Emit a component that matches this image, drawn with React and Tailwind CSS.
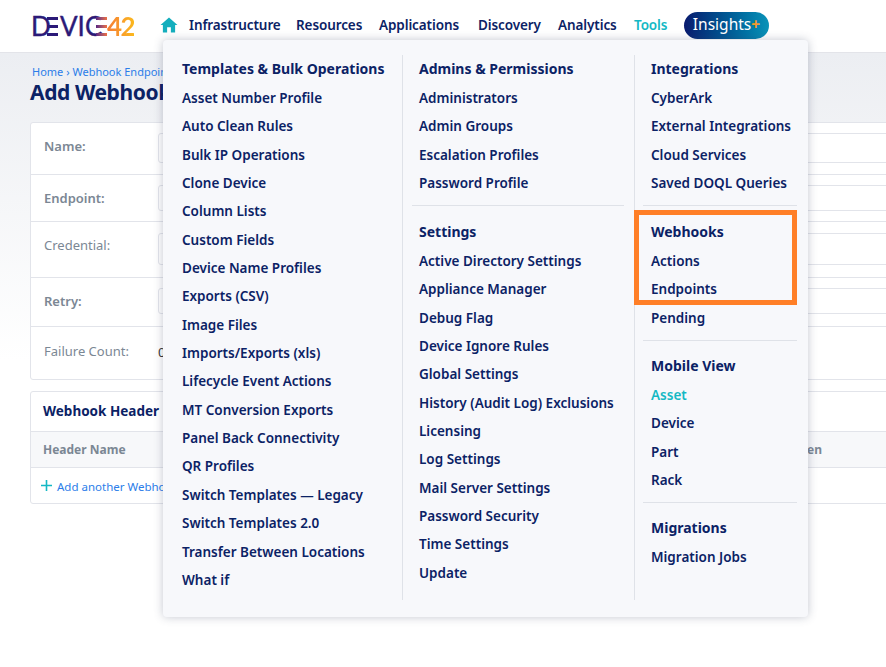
const font = { fontFamily: '"Noto Sans", "Liberation Sans", sans-serif' };

const col1 = ["Asset Number Profile", "Auto Clean Rules", "Bulk IP Operations", "Clone Device", "Column Lists", "Custom Fields", "Device Name Profiles", "Exports (CSV)", "Image Files", "Imports/Exports (xls)", "Lifecycle Event Actions", "MT Conversion Exports", "Panel Back Connectivity", "QR Profiles", "Switch Templates — Legacy", "Switch Templates 2.0", "Transfer Between Locations", "What if"];

const admins = ["Administrators", "Admin Groups", "Escalation Profiles", "Password Profile"];
const settings = ["Active Directory Settings", "Appliance Manager", "Debug Flag", "Device Ignore Rules", "Global Settings", "History (Audit Log) Exclusions", "Licensing", "Log Settings", "Mail Server Settings", "Password Security", "Time Settings", "Update"];
const integrations = ["CyberArk", "External Integrations", "Cloud Services", "Saved DOQL Queries"];
const webhooks = ["Actions", "Endpoints", "Pending"];
const mobile = ["Asset", "Device", "Part", "Rack"];

function Section({ title, items, active }) {
  return (
    <div>
      <div className="h-[29px] text-[14px] leading-[27px] font-bold text-[#0b2265] whitespace-nowrap">{title}</div>
      {items.map((item) => (
        <div key={item} className={"h-[28.35px] text-[13.5px] leading-[28.35px] font-semibold whitespace-nowrap " + (item === active ? "text-[#14b8c4]" : "text-[#0b2265]")}>
          {item}
        </div>
      ))}
    </div>
  );
}

function Bars({ className }) {
  return (
    <span className="flex flex-col justify-between shrink-0 w-[11px] h-[19px]">
      <span className={"block h-[3px] " + className} />
      <span className={"block h-[3px] " + className} />
      <span className={"block h-[3px] " + className} />
    </span>
  );
}

function Logo() {
  return (
    <div className="flex items-center shrink-0 h-[24px] w-[105px] text-[26px] leading-[24px] text-[#2b1a78] [-webkit-text-stroke:0.4px_#2b1a78]" style={{ fontFamily: '"Liberation Sans Narrow", "Lato", sans-serif' }}>
      <span className="w-[16px] shrink-0">D</span>
      <Bars className="bg-[#2b1a78]" />
      <span className="w-[38px] shrink-0 pl-[2px]">VIC</span>
      <Bars className="bg-gradient-to-r from-[#5a2380] to-[#f0703a]" />
      <span className="shrink-0 font-bold tracking-[-1.5px] bg-gradient-to-r from-[#f47b32] to-[#fbb81c] bg-clip-text text-transparent [-webkit-text-stroke:0]" style={{ fontFamily: '"Lato", sans-serif' }}>42</span>
    </div>
  );
}

function FormRow({ label, height, bold, low, boxTop, boxHeight, children }) {
  return (
    <div className="flex border-b border-[#e2e4ea] last:border-b-0" style={{ height }}>
      <div className={"w-[127px] pl-[13px] text-[13px] text-[#7b8794] " + (low ? "pt-[15px] " : "pt-[14px] ") + (bold ? "font-semibold" : "")}>{label}</div>
      {boxHeight ? (
        <div className="flex-1 border border-[#e2e4ea] rounded-[3px] bg-white" style={{ marginTop: boxTop, height: boxHeight }} />
      ) : (
        <div className="pt-[16px] text-[13px] text-[#333]">{children}</div>
      )}
    </div>
  );
}

export default function App() {
  return (
    <div className="relative h-[667px] w-[886px] overflow-hidden bg-white" style={font}>
      <header className="flex items-center h-[53px] bg-white border-b border-[#e3e4e9] pl-[31px]">
        <Logo />
        <svg className="shrink-0 ml-[24px] mr-[11px] -mt-[2px]" width="18" height="16" viewBox="0 0 19 17">
          <path d="M9.5 0.5 L0.5 8.5 L3 8.5 L3 16.5 L7.5 16.5 L7.5 11 L11.5 11 L11.5 16.5 L16 16.5 L16 8.5 L18.5 8.5 Z" fill="#14aebd" />
        </svg>
        <nav className="flex items-center gap-[17px] -mt-[2px] text-[13.5px] font-semibold tracking-[-0.1px] text-[#0b2265] whitespace-nowrap">
          <span className="w-[90px]">Infrastructure</span>
          <span className="w-[66px]">Resources</span>
          <span className="w-[82px]">Applications</span>
          <span className="w-[63px]">Discovery</span>
          <span className="w-[59px]">Analytics</span>
          <span className="w-[35px] text-[#14b8c4]">Tools</span>
          <span className="flex items-center justify-center shrink-0 h-[27px] w-[85px] -ml-[2px] rounded-full bg-gradient-to-r from-[#0a1a6e] to-[#0b93b8] text-[15.5px] font-normal tracking-normal text-white">
            Insights<span className="font-bold text-[#f59a2c]">+</span>
          </span>
        </nav>
      </header>

      <main className="h-[614px] pl-[30px] bg-gradient-to-b from-[#eceef2] via-white to-white">
        <div className="pt-[11px] pl-[2px] text-[11px] leading-[16px] text-[#2b7de9] whitespace-nowrap">Home › Webhook Endpoints</div>
        <h1 className="-mt-[3px] text-[21px] leading-[30px] font-bold tracking-[-0.4px] text-[#0b2265]">Add Webhook</h1>

        <section className="mt-[15px] w-[870px] bg-white border border-[#e2e4ea] rounded-[3px]">
          <FormRow label="Name:" height={52} bold boxTop={10} boxHeight={30} />
          <FormRow label="Endpoint:" height={47} bold boxTop={10} boxHeight={26} />
          <FormRow label="Credential:" height={56} boxTop={11} boxHeight={32} />
          <FormRow label="Retry:" height={49} bold boxTop={10} boxHeight={26} />
          <FormRow label="Failure Count:" height={52} low>0</FormRow>
        </section>

        <section className="mt-[11px] w-[870px] bg-white border border-[#e2e4ea] rounded-[3px]">
          <div className="h-[40px] border-b border-[#e2e4ea] pl-[12px] text-[13.5px] leading-[38px] font-bold text-[#0b2265]">Webhook Header</div>
          <div className="flex justify-between h-[36px] border-b border-[#e2e4ea] bg-[#f7f8fa] pl-[12px] pr-[77px] text-[12px] leading-[35px] font-bold text-[#7b8794]">
            <span>Header Name</span>
            <span>Hidden</span>
          </div>
          <div className="flex items-center h-[35px] pt-[2px] pl-[10px] text-[11.5px] text-[#2b7de9] whitespace-nowrap">
            <svg className="mr-[5px] shrink-0 -mt-[2px]" width="11" height="11" viewBox="0 0 11 11">
              <path d="M5.5 0 V11 M0 5.5 H11" stroke="#14b8c4" strokeWidth="1.6" />
            </svg>
            Add another Webhook Header
          </div>
        </section>
      </main>

      {/* tools dropdown */}
      <div className="absolute left-[163px] top-[40px] flex w-[645px] h-[577px] pt-[15px] bg-[#f7f8fb] rounded-[4px] shadow-[0_0_10px_rgba(60,70,100,0.3)]">
        <div className="w-[240px] h-[545px] pl-[19px] border-r border-[#dfe2e8]">
          <Section title="Templates & Bulk Operations" items={col1} />
        </div>
        <div className="w-[232px] h-[545px] pl-[16px] border-r border-[#dfe2e8]">
          <Section title="Admins & Permissions" items={admins} />
          <div className="-ml-[7px] w-[212px] mt-[8px] mb-[11.5px] border-t border-[#dfe2e8]" />
          <Section title="Settings" items={settings} />
        </div>
        <div className="w-[173px] pl-[16px]">
          <Section title="Integrations" items={integrations} />
          <div className="-ml-[8px] w-[154px] mt-[8px] mb-[11.5px] border-t border-[#dfe2e8]" />
          <Section title="Webhooks" items={webhooks} />
          <div className="-ml-[8px] w-[154px] mt-[8px] mb-[11px] border-t border-[#dfe2e8]" />
          <Section title="Mobile View" items={mobile} active="Asset" />
          <div className="-ml-[8px] w-[154px] mt-[8px] mb-[10.5px] border-t border-[#dfe2e8]" />
          <Section title="Migrations" items={["Migration Jobs"]} />
        </div>
      </div>

      {/* annotation box */}
      <div className="absolute left-[634px] top-[210px] w-[163px] h-[95px] border-[5px] border-[#ff7f27]" />
    </div>
  );
}
